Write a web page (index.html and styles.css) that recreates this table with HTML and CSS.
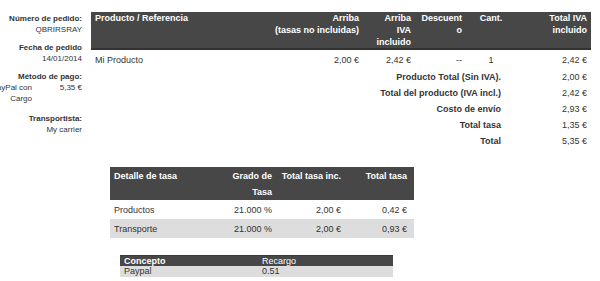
FILE: index.html
```html
<!DOCTYPE html>
<html lang="es">
<head>
<meta charset="utf-8">
<title>Pedido</title>
<link rel="stylesheet" href="styles.css">
</head>
<body>
<div class="page">
  <aside class="sidebar">
    <div class="info">
      <div class="label">Número de pedido:</div>
      <div>QBRIRSRAY</div>
    </div>
    <div class="info">
      <div class="label">Fecha de pedido</div>
      <div>14/01/2014</div>
    </div>
    <div class="info info-pay">
      <div class="label">Método de pago:</div>
      <div class="pay">
        <span class="pay-method">PayPal con Cargo</span>
        <span class="pay-amount">5,35 €</span>
      </div>
    </div>
    <div class="info">
      <div class="label">Transportista:</div>
      <div>My carrier</div>
    </div>
  </aside>
  <main class="main">
    <table class="products">
      <colgroup>
        <col class="c-prod"><col class="c-price"><col class="c-priceiva"><col class="c-disc"><col class="c-qty"><col class="c-total">
      </colgroup>
      <thead>
        <tr>
          <th class="left">Producto / Referencia</th>
          <th class="right">Arriba<br>(tasas no incluidas)</th>
          <th class="right narrow">Arriba IVA incluido</th>
          <th class="right">Descuento</th>
          <th class="center">Cant.</th>
          <th class="right">Total IVA incluido</th>
        </tr>
      </thead>
      <tbody>
        <tr class="item">
          <td>Mi Producto</td>
          <td class="right">2,00 €</td>
          <td class="right">2,42 €</td>
          <td class="right">--</td>
          <td class="center">1</td>
          <td class="right">2,42 €</td>
        </tr>
        <tr class="sum"><th colspan="5" class="sum-label">Producto Total (Sin IVA).</th><td class="right">2,00 €</td></tr>
        <tr class="sum"><th colspan="5" class="sum-label">Total del producto (IVA incl.)</th><td class="right">2,42 €</td></tr>
        <tr class="sum"><th colspan="5" class="sum-label">Costo de envío</th><td class="right">2,93 €</td></tr>
        <tr class="sum"><th colspan="5" class="sum-label">Total tasa</th><td class="right">1,35 €</td></tr>
        <tr class="sum"><th colspan="5" class="sum-label">Total</th><td class="right">5,35 €</td></tr>
      </tbody>
    </table>

    <table class="taxes">
      <colgroup>
        <col class="t-name"><col class="t-rate"><col class="t-base"><col class="t-total">
      </colgroup>
      <thead>
        <tr>
          <th class="left">Detalle de tasa</th>
          <th class="right">Grado de Tasa</th>
          <th class="right">Total tasa inc.</th>
          <th class="right last">Total tasa</th>
        </tr>
      </thead>
      <tbody>
        <tr>
          <td>Productos</td>
          <td class="right">21.000 %</td>
          <td class="right">2,00 €</td>
          <td class="right last">0,42 €</td>
        </tr>
        <tr class="alt">
          <td>Transporte</td>
          <td class="right">21.000 %</td>
          <td class="right">2,00 €</td>
          <td class="right last">0,93 €</td>
        </tr>
      </tbody>
    </table>

    <table class="fees">
      <colgroup><col class="f-name"><col class="f-val"></colgroup>
      <thead>
        <tr><th>Concepto</th><th class="light">Recargo</th></tr>
      </thead>
      <tbody>
        <tr><td>Paypal</td><td>0.51</td></tr>
      </tbody>
    </table>
  </main>
</div>
</body>
</html>
```

FILE: styles.css
```css
html, body {
  margin: 0;
  padding: 0;
  background: #ffffff;
}

body {
  font-family: "Liberation Sans", Arial, sans-serif;
  color: #333333;
}

.page {
  display: flex;
  align-items: flex-start;
  padding-top: 12px;
}

.sidebar {
  width: 82px;
  flex-shrink: 0;
  text-align: right;
  font-size: 8px;
  line-height: 11px;
  padding-top: 1px;
}

.info {
  margin-bottom: 7px;
}

.info-pay {
  margin-bottom: 9px;
}

.label {
  font-weight: bold;
}

.pay {
  display: flex;
  justify-content: flex-end;
}

.pay-method {
  flex-shrink: 0;
  width: 50px;
  text-align: right;
}

.pay-amount {
  flex-shrink: 0;
  width: 50px;
  text-align: right;
}

.main {
  margin-left: 9px;
  width: 500px;
  font-size: 9px;
}

table {
  border-collapse: collapse;
  table-layout: fixed;
}

.left { text-align: left; }
.right { text-align: right; }
.center { text-align: center; }

/* Products table */
.products {
  width: 500px;
}

.c-prod { width: 179px; }
.c-price { width: 93px; }
.c-priceiva { width: 52px; }
.c-disc { width: 51px; }
.c-qty { width: 50px; }
.c-total { width: 75px; }

.products thead th {
  background: #474747;
  color: #ffffff;
  font-weight: bold;
  vertical-align: top;
  line-height: 12px;
  padding: 0 4px;
  border-bottom: 2px solid #333333;
  overflow-wrap: anywhere;
  height: 36px;
}

.products thead th.narrow {
  padding-left: 8px;
}

.products td {
  line-height: 12px;
  padding: 2px 4px;
}

.products .item td {
  padding: 4px 4px 3px 4px;
}

.products .sum-label {
  text-align: right;
  font-weight: bold;
  line-height: 12px;
  padding: 2px 15px 2px 4px;
}

/* Taxes table */
.taxes {
  width: 304px;
  margin: 18px 0 0 19px;
}

.t-name { width: 116px; }
.t-rate { width: 50px; }
.t-base { width: 69px; }
.t-total { width: 69px; }

.taxes th {
  background: #474747;
  color: #ffffff;
  font-weight: bold;
  vertical-align: top;
  line-height: 16px;
  padding: 1px 4px 0 4px;
}

.taxes td {
  line-height: 16px;
  padding: 2px 4px 1px 4px;
}

.taxes .last {
  padding-right: 7px;
}

.taxes .alt td {
  background: #dddddd;
}

/* Fees table */
.fees {
  width: 273px;
  margin: 17px 0 0 29px;
}

.f-name { width: 138px; }
.f-val { width: 135px; }

.fees th {
  background: #474747;
  color: #ffffff;
  text-align: left;
  font-weight: bold;
  line-height: 10px;
  padding: 0 4px;
  border-top: 1px solid #3a3a3a;
}

.fees th.light {
  font-weight: normal;
}

.fees td {
  background: #dddddd;
  line-height: 11px;
  padding: 0 4px;
}
```
